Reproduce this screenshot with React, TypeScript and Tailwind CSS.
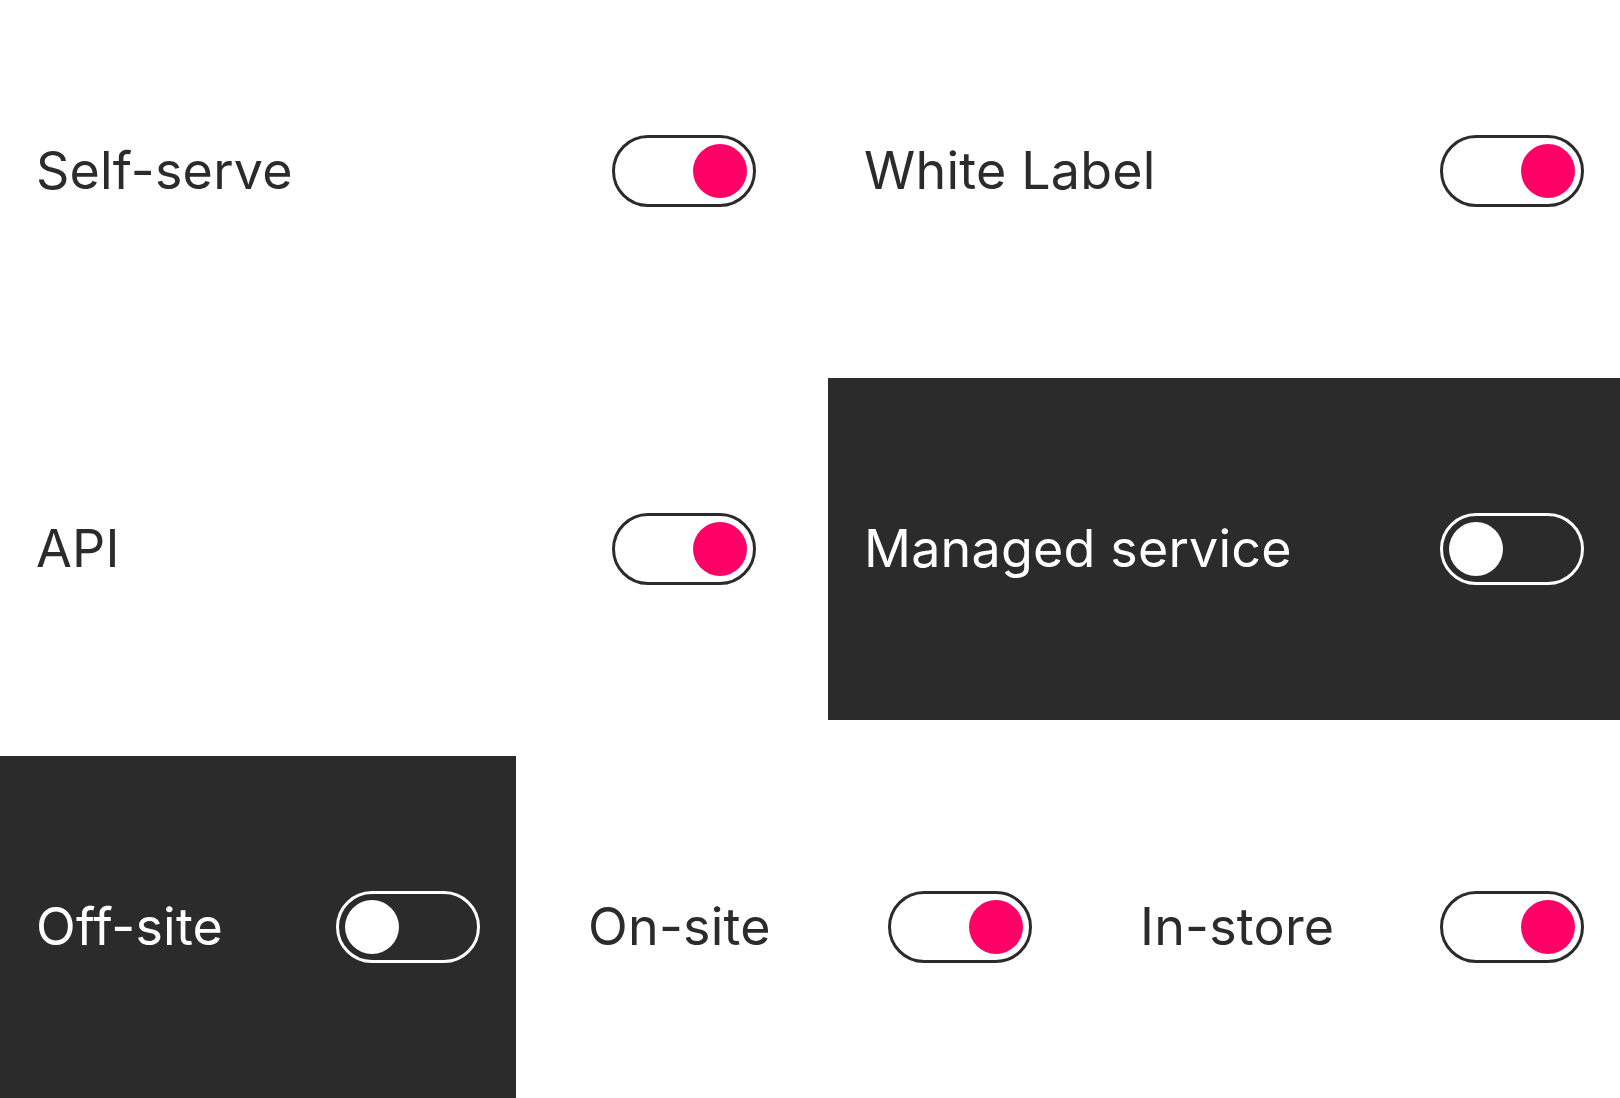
import React from "react";

/* ─── Data ───────────────────────────────────────── */

type Item = { label: string; on: boolean; dark?: boolean };

const TOP_ROWS: Item[][] = [
  [
    { label: "Self-serve", on: true },
    { label: "White Label", on: true },
  ],
  [
    { label: "API", on: true },
    { label: "Managed service", on: false, dark: true },
  ],
];

const BOTTOM_ROW: Item[] = [
  { label: "Off-site", on: false, dark: true },
  { label: "On-site", on: true },
  { label: "In-store", on: true },
];

/* ─── Toggle ─────────────────────────────────────── */

function Toggle({ on, dark }: { on: boolean; dark?: boolean }) {
  return (
    <div
      className={`flex h-[72px] w-[144px] shrink-0 items-center rounded-full border-[3px] px-[6px] ${
        on ? "justify-end" : "justify-start"
      } ${dark ? "border-white" : "border-[#2b2b2b] bg-white"}`}
    >
      <div
        className={`h-[54px] w-[54px] rounded-full ${
          dark ? "bg-white" : "bg-[#ff0066]"
        }`}
      />
    </div>
  );
}

function Cell({ item }: { item: Item }) {
  return (
    <div
      className={`flex h-[342px] items-center justify-between px-9 ${
        item.dark ? "bg-[#2b2b2b] text-white" : "bg-white text-[#2b2b2b]"
      }`}
    >
      <span className="text-[52px] leading-none tracking-[0.2px]">
        {item.label}
      </span>
      <Toggle on={item.on} dark={item.dark} />
    </div>
  );
}

/* ─── Page ───────────────────────────────────────── */

export default function App() {
  return (
    <div
      className="flex h-[1098px] w-[1620px] flex-col gap-9 overflow-hidden bg-white"
      style={{ fontFamily: "Inter, 'Noto Sans', sans-serif" }}
    >
      {TOP_ROWS.map((row, i) => (
        <div key={i} className="grid grid-cols-2 gap-9">
          {row.map((item) => (
            <Cell key={item.label} item={item} />
          ))}
        </div>
      ))}
      <div className="grid grid-cols-3 gap-9">
        {BOTTOM_ROW.map((item) => (
          <Cell key={item.label} item={item} />
        ))}
      </div>
    </div>
  );
}
